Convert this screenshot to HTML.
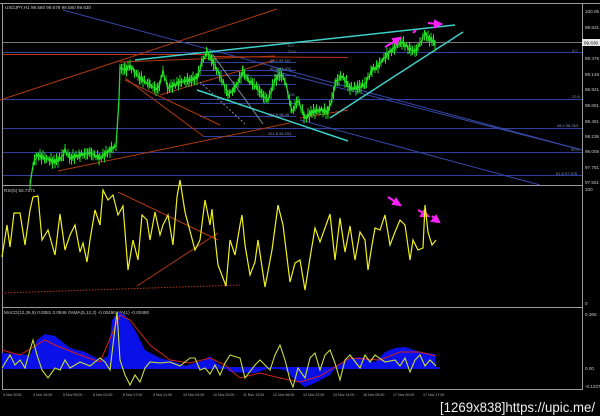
<!DOCTYPE html><html><head><meta charset="utf-8"><style>
html,body{margin:0;padding:0;background:#000;width:600px;height:416px;overflow:hidden}
svg{display:block}
text{font-family:"Liberation Sans",sans-serif}
</style></head><body>
<svg width="600" height="416" viewBox="0 0 600 416" xmlns="http://www.w3.org/2000/svg">
<rect width="600" height="416" fill="#000"/>
<!-- frame -->
<g stroke="#9a9a9a" stroke-width="1" fill="none">
<line x1="0" y1="3.5" x2="600" y2="3.5"/>
<line x1="582.5" y1="3" x2="582.5" y2="390"/>
<line x1="2.5" y1="3" x2="2.5" y2="390"/>
<line x1="2" y1="185.5" x2="583" y2="185.5"/>
<line x1="2" y1="307.5" x2="583" y2="307.5"/>
<line x1="2" y1="389.5" x2="583" y2="389.5"/>
</g>
<!-- main horizontal lines -->
<g stroke-width="1">
<line x1="3" y1="42.5" x2="582" y2="42.5" stroke="#777"/>
<line x1="3" y1="52.5" x2="582" y2="52.5" stroke="#3040a0"/>
<line x1="3" y1="54.5" x2="210" y2="54.5" stroke="#c03010"/>
<line x1="210" y1="56.5" x2="348" y2="57.5" stroke="#c03010"/>
<line x1="3" y1="99.5" x2="582" y2="99.5" stroke="#3040a0"/>
<line x1="3" y1="128.5" x2="582" y2="128.5" stroke="#3040a0"/>
<line x1="3" y1="152.5" x2="582" y2="152.5" stroke="#3040a0"/>
<line x1="3" y1="175.5" x2="582" y2="175.5" stroke="#3040a0"/>
<line x1="200" y1="62.5" x2="296" y2="62.5" stroke="#3040a0"/>
<line x1="200" y1="70.5" x2="296" y2="70.5" stroke="#3040a0"/>
<line x1="200" y1="75.5" x2="296" y2="75.5" stroke="#3040a0"/>
<line x1="200" y1="84.5" x2="296" y2="84.5" stroke="#3040a0"/>
<line x1="200" y1="103.5" x2="296" y2="103.5" stroke="#3040a0"/>
<line x1="200" y1="116.5" x2="296" y2="116.5" stroke="#3040a0"/>
<line x1="203" y1="136.5" x2="296" y2="136.5" stroke="#3040a0"/>
</g>
<!-- diagonals -->
<g fill="none" stroke-width="1">
<line x1="63" y1="10" x2="582" y2="150" stroke="#3548a8"/>
<line x1="300" y1="120" x2="540" y2="185" stroke="#3548a8"/>
<line x1="270" y1="70" x2="582" y2="150" stroke="#3548a8"/>
<line x1="0" y1="100" x2="277" y2="9" stroke="#b03a10"/>
<line x1="58" y1="171" x2="290" y2="123" stroke="#b03a10"/>
<line x1="120" y1="62" x2="275" y2="56" stroke="#b03a10"/>
<line x1="125" y1="80" x2="220" y2="125" stroke="#b03a10"/>
<line x1="160" y1="95" x2="275" y2="60" stroke="#b03a10"/>
<line x1="125" y1="78" x2="203" y2="136" stroke="#b03a10"/>
<line x1="300" y1="118" x2="348" y2="110" stroke="#b03a10"/>
<line x1="213" y1="55" x2="263" y2="124" stroke="#8090a0"/>
<line x1="200" y1="82" x2="245" y2="124" stroke="#8090a0" stroke-dasharray="2 2"/>
</g>
<g stroke="#40d0c8" stroke-width="1.5" fill="none">
<line x1="135" y1="60" x2="455" y2="25"/>
<line x1="330" y1="118" x2="463" y2="32"/>
<line x1="197" y1="90" x2="348" y2="141"/>
</g>
<!-- price -->
<polyline id="price" fill="none" stroke="#22dd22" stroke-width="1.3"/>
<g id="candles" stroke="#22dd22" stroke-width="1"></g>
<!-- magenta arrows -->
<g stroke="#ff20ff" stroke-width="2" fill="#ff20ff">
<line x1="385" y1="47" x2="397" y2="40"/><polygon points="400,38 393,39 396,44"/>
<line x1="413" y1="33" x2="416" y2="30"/>
<line x1="428" y1="23" x2="437" y2="24"/><polygon points="441,24 435,21 435,27"/>
<line x1="388" y1="197" x2="397" y2="203"/><polygon points="400,205 393,204 396,199"/>
<line x1="418" y1="210" x2="425" y2="214"/><polygon points="428,216 421,216 424,211"/>
<line x1="432" y1="216" x2="436" y2="220"/><polygon points="439,222 432,221 436,216"/>
</g>
<!-- fib labels -->
<g fill="#8090c0" font-size="4">
<text x="288" y="47">0.0</text><text x="288" y="53">23.6</text><text x="270" y="62">38.2 99.167</text>
<text x="270" y="70">50.0 98.930</text><text x="275" y="77">61.8</text><text x="288" y="96">100</text>
<text x="268" y="116">161.8 98.45</text><text x="268" y="135">261.8 98.253</text>
<text x="572" y="52">0.0</text><text x="572" y="98">23.6</text><text x="557" y="127">38.2 98.263</text>
<text x="571" y="151">50.0</text><text x="556" y="175">61.8 97.676</text>
</g>
<!-- price axis -->
<g fill="#c8c8c8" font-size="4.6">
<text x="585" y="13">100.05</text><text x="585" y="29">99.831</text><text x="585" y="60">99.376</text>
<text x="585" y="76">99.146</text><text x="585" y="91">98.921</text><text x="585" y="107">98.691</text>
<text x="585" y="123">98.461</text><text x="585" y="138">98.236</text><text x="585" y="153">98.006</text>
<text x="585" y="169">97.781</text><text x="585" y="184">97.551</text>
<text x="585" y="191">100</text><text x="585" y="305">0</text>
<text x="585" y="316">0.365</text><text x="585" y="370">0.00</text><text x="585" y="388">-0.1207</text>
</g>
<rect x="582" y="39" width="18" height="7" fill="#e8e8e8"/>
<text x="584" y="44.5" font-size="4.6" fill="#000">99.630</text>
<text x="5" y="9" font-size="4.6" fill="#c8c8c8">USDJPY,H1  99.580 99.679 99.580 99.630</text>
<!-- RSI -->
<text x="4" y="192" font-size="4.6" fill="#c8c8c8">RSI(5) 55.7371</text>
<g fill="none" stroke-width="1">
<line x1="118" y1="192" x2="218" y2="240" stroke="#b03a10"/>
<line x1="137" y1="286" x2="218" y2="233" stroke="#b03a10"/>
<line x1="2" y1="293" x2="240" y2="285" stroke="#b03a10" stroke-dasharray="1.5 1.5"/>
</g>
<polyline fill="none" stroke="#f0f020" stroke-width="1.2" points="2,257 7,225 10,247 14,213 20,213 25,245 30,210 33,197 38,196 42,240 48,230 55,255 60,214 65,250 70,235 75,225 80,252 83,243 87,262 90,240 95,210 100,225 103,190 108,200 113,195 118,215 123,206 128,270 133,240 138,260 142,215 147,220 150,240 155,212 160,235 163,225 168,215 173,245 177,197 180,180 185,212 195,250 200,240 205,200 210,225 212,209 213,220 218,265 226,286 230,240 235,255 240,225 242,215 245,245 250,275 255,262 258,240 265,287 272,250 278,205 283,225 290,282 295,263 300,260 305,290 310,258 315,228 320,242 330,214 335,260 340,218 345,252 350,226 355,260 360,232 365,240 368,270 372,245 375,228 380,230 385,215 390,245 395,232 400,220 405,225 410,260 413,240 418,250 423,248 425,205 428,232 432,245 436,240"/>
<!-- MACD -->
<text x="4" y="314" font-size="4.6" fill="#c8c8c8">MACD(12,26,9) 0.0081 0.0946  OsMA(5,12,2) -0.00490   MA(1) -0.00490</text>
<polygon fill="#0a10e8" points="2,368 2,353 30,355 37,340 45,334 55,336 70,348 85,352 100,360 108,356 112,320 118,312 125,315 135,330 145,350 160,358 175,362 185,366 205,360 210,356 215,362 225,368 230,372 255,373 270,368 285,370 295,380 305,387 315,383 330,375 335,368 345,360 360,357 375,362 385,352 395,348 405,347 420,352 435,354 436,368"/>
<line x1="2" y1="368" x2="440" y2="368" stroke="#0a10e8" stroke-width="2"/>
<polyline fill="none" stroke="#d02020" stroke-width="1" points="2,350 20,355 45,340 55,345 80,355 100,362 120,315 130,320 150,345 170,360 190,363 210,358 225,365 240,378 260,373 280,378 300,382 320,376 350,358 380,360 400,352 420,352 436,356"/>
<polyline fill="none" stroke="#c8e040" stroke-width="1.1" points="2,368 10,355 15,365 20,360 25,368 30,350 33,340 37,355 42,370 48,378 55,368 60,370 65,360 70,368 80,362 90,366 100,358 105,362 110,370 115,328 117,312 120,360 125,375 130,385 135,375 140,382 145,368 150,362 160,363 170,362 180,366 190,358 195,358 200,370 205,368 210,374 215,365 220,375 225,363 230,355 240,358 245,378 255,365 260,360 270,370 275,355 280,345 285,360 290,380 293,387 298,368 305,378 310,358 315,353 320,370 325,355 330,350 335,363 340,380 345,360 350,355 360,368 365,355 370,362 375,355 385,362 395,360 400,366 405,358 410,372 415,360 420,355 425,366 430,360 436,366"/>
<!-- time axis -->
<g fill="#b0b0b0" font-size="3.6">
<text x="3" y="396">3 Nov 2015</text><text x="33" y="396">4 Nov 16:00</text><text x="63" y="396">5 Nov 09:00</text>
<text x="93" y="396">6 Nov 01:00</text><text x="123" y="396">6 Nov 17:00</text><text x="153" y="396">9 Nov 11:00</text>
<text x="183" y="396">10 Nov 04:00</text><text x="213" y="396">10 Nov 20:00</text><text x="243" y="396">11 Nov 13:00</text>
<text x="273" y="396">12 Nov 06:00</text><text x="303" y="396">12 Nov 22:00</text><text x="333" y="396">13 Nov 14:00</text>
<text x="363" y="396">16 Nov 08:00</text><text x="393" y="396">17 Nov 00:00</text><text x="423" y="396">17 Nov 17:00</text>
</g>
<text x="440" y="412" font-size="14" fill="#f0f0f0" textLength="155" lengthAdjust="spacingAndGlyphs">[1269x838]https://upic.me/</text>
</svg>
<script>
var k=[[30,185],[33,165],[37,155],[45,158],[55,162],[62,157],[65,150],[70,158],[80,155],[90,153],[100,158],[110,150],[116,146],[119,100],[120,68],[125,70],[130,66],[135,72],[140,78],[150,85],[158,90],[163,72],[168,88],[180,82],[190,80],[197,78],[202,62],[207,52],[212,60],[218,72],[222,80],[228,95],[235,88],[243,72],[248,80],[255,85],[262,95],[268,100],[275,80],[280,74],[285,80],[292,112],[298,100],[305,118],[312,112],[320,110],[328,112],[332,98],[336,82],[342,76],[350,88],[358,88],[365,84],[372,70],[378,66],[384,58],[390,52],[396,46],[402,42],[408,48],[415,52],[420,44],[425,33],[428,38],[432,40],[436,45]];
var pts=[],g=document.getElementById('candles'),s='';
for(var i=0;i<k.length-1;i++){var a=k[i],b=k[i+1];for(var x=a[0];x<b[0];x+=1.5){var t=(x-a[0])/(b[0]-a[0]);var y=a[1]+(b[1]-a[1])*t+Math.sin(x*2.3)*2;pts.push(x.toFixed(1)+','+y.toFixed(1));var h=2+Math.abs(Math.sin(x*1.7))*4;s+='<line x1="'+x+'" y1="'+(y-h)+'" x2="'+x+'" y2="'+(y+h)+'"/>';}}
document.getElementById('price').setAttribute('points',pts.join(' '));g.innerHTML=s;
</script>
</body></html>
